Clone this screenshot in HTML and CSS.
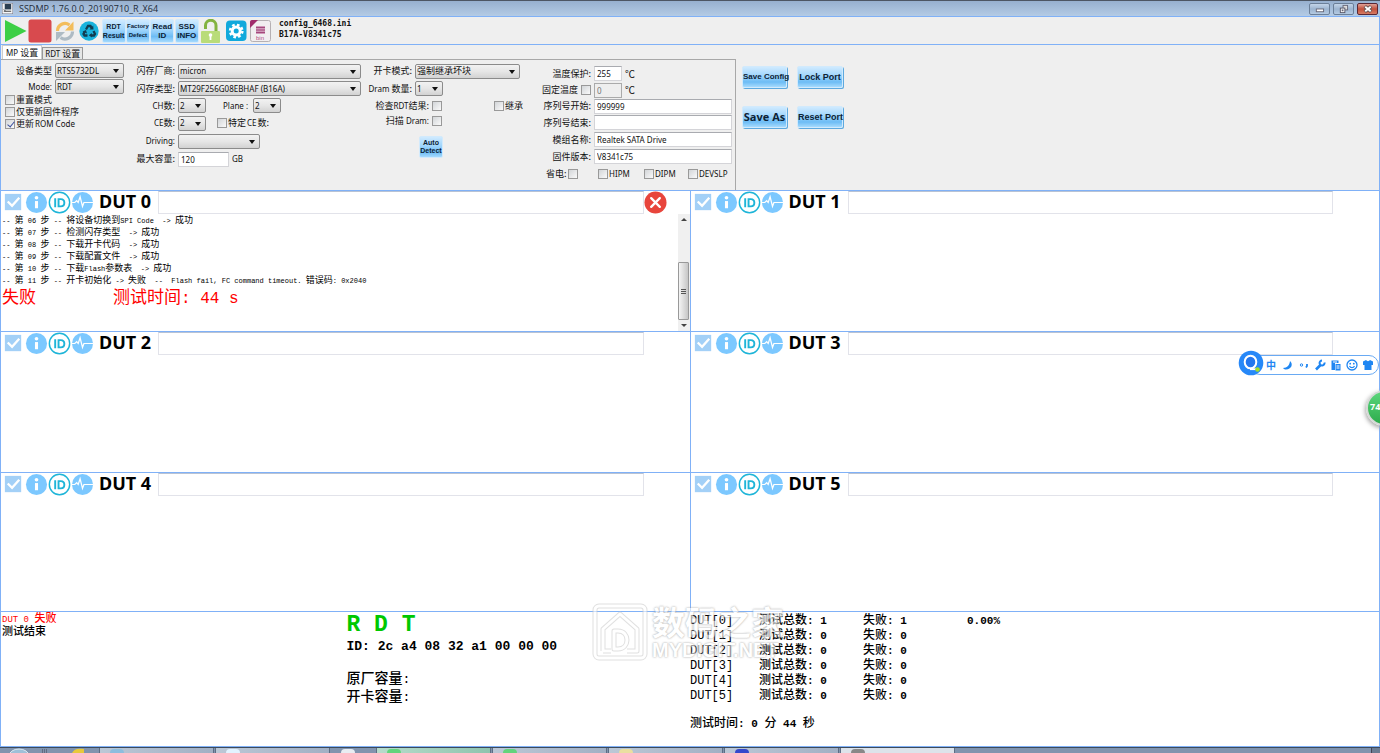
FILE: index.html
```html
<!DOCTYPE html>
<html lang="zh-CN">
<head>
<meta charset="utf-8">
<title>SSDMP 1.76.0.0_20190710_R_X64</title>
<link rel="stylesheet" href="styles.css">
</head>
<body>
<svg class="defs" aria-hidden="true">
  <symbol id="i-check" viewBox="0 0 24 24"><rect x="3" y="3" width="17" height="17" fill="#a3d0f7"/><path d="M6 11l4.500 4.500L18 7" fill="none" stroke="#fff" stroke-width="2.400"/></symbol>
  <symbol id="i-info" viewBox="0 0 24 24"><circle cx="12" cy="12" r="11" fill="#7cc8ff"/><circle cx="12" cy="7" r="1.900" fill="#fff"/><path d="M12 10.500v7.500" stroke="#fff" stroke-width="3.200"/></symbol>
  <symbol id="i-id" viewBox="0 0 24 24"><circle cx="12" cy="12" r="10.600" fill="#fff" stroke="#1fb5d8" stroke-width="1.500"/><path d="M7.500 7.500v9.500M11 8.500v7.500h2.300c5 0 5-7.500 0-7.500z" fill="none" stroke="#1fb5d8" stroke-width="2"/></symbol>
  <symbol id="i-pulse" viewBox="0 0 24 24"><circle cx="12" cy="12" r="11" fill="#7cc8ff"/><path d="M0 12h4l2-2 1.500 2 2-6 2.500 10 1.500-4H23" fill="none" stroke="#fff" stroke-width="1.300"/></symbol>
</svg>

<header class="titlebar">
  <svg class="app-icon" viewBox="0 0 12 12"><rect width="12" height="12" fill="#f4f6f8" stroke="#667"/><rect x="3" y="1" width="7" height="6" fill="#2b3f52"/><path d="M2 9h8M2 7l2 2" stroke="#333"/></svg>
  <h1>SSDMP 1.76.0.0_20190710_R_X64</h1>
  <div class="window-buttons">
    <button type="button" aria-label="最小化"><svg viewBox="0 0 20 11"><rect x="6.500" y="5.500" width="8" height="3" fill="#fff" stroke="#667"/></svg></button>
    <button type="button" aria-label="还原"><svg viewBox="0 0 20 11"><rect x="9.500" y="1.500" width="5" height="5" fill="#ddd" stroke="#667"/><rect x="6.500" y="4.500" width="5" height="5" fill="#fff" stroke="#556"/><rect x="8" y="6" width="2" height="2" fill="#667"/></svg></button>
    <button type="button" class="close" aria-label="关闭"><svg viewBox="0 0 20 11"><path d="M7 2.500l7 6M14 2.500l-7 6" stroke="#655" stroke-width="4"/><path d="M7.500 3l6 5M13.500 3l-6 5" stroke="#fff" stroke-width="2"/></svg></button>
  </div>
</header>

<nav class="toolbar">
  <div class="tools">
    <button type="button" class="tool" aria-label="开始"><svg viewBox="0 0 24 24"><path d="M1 1L22.500 12 1 23z" fill="#3ccf45"/></svg></button>
    <button type="button" class="tool" aria-label="停止"><svg viewBox="0 0 24 24"><rect x="0.500" y="0.500" width="23" height="23" rx="2.500" fill="#d84a4e"/></svg></button>
    <button type="button" class="tool" aria-label="刷新"><svg viewBox="0 0 24 24"><path d="M4.500 12a7.500 7.500 0 0 1 12-6" fill="none" stroke="#f3bd5b" stroke-width="3.200"/><path d="M20.500 2.500v9h-8.500z" fill="#f3bd5b"/><path d="M19.500 12.500a7.500 7.500 0 0 1-12 6" fill="none" stroke="#aebbc4" stroke-width="3.200"/><path d="M3 22v-9h9z" fill="#aebbc4"/></svg></button>
    <button type="button" class="tool" aria-label="循环"><svg viewBox="0 0 24 24"><circle cx="12" cy="12" r="9.700" fill="#19b3dd"/><g fill="none" stroke="#113c50" stroke-width="2.300"><path d="M9 10.500l2-3.500h2.500l1 2"/><path d="M16.500 12l1.500 3-1 1.500h-3"/><path d="M10.500 16.500H7.500L6.500 15l1-2"/></g><path d="M12.500 10.500h4l-.3-4zM14.800 14v4.600l-3-2.300zM5.500 12.500l3.500-1.500 1 3.500z" fill="#113c50"/></svg></button>
    <button type="button" class="tool glossy">RDT<br>Result</button>
    <button type="button" class="tool glossy tiny">Factory<br>Defect</button>
    <button type="button" class="tool glossy medium">Read<br>ID</button>
    <button type="button" class="tool glossy medium">SSD<br>INFO</button>
    <button type="button" class="tool" aria-label="解锁"><svg viewBox="0 0 24 24"><path d="M6.500 10V6.500a5 5 0 0 1 10.500 0V12" fill="none" stroke="#83b340" stroke-width="3"/><rect x="2" y="12" width="19" height="12" rx="1" fill="#b9dc79"/><circle cx="11.500" cy="16" r="1.800" fill="#fff"/><path d="M11.500 16v5" stroke="#fff" stroke-width="1.800"/></svg></button>
    <button type="button" class="tool" aria-label="设置"><svg viewBox="0 0 24 24"><rect x="2" y="1.500" width="20.500" height="20.500" rx="4" fill="#10a9dc"/><circle cx="12.200" cy="12" r="6.200" fill="none" stroke="#fff" stroke-width="2.400" stroke-dasharray="2.600 2.270"/><circle cx="12.200" cy="12" r="4" fill="none" stroke="#fff" stroke-width="3"/></svg></button>
    <button type="button" class="tool" aria-label="bin 文件"><svg viewBox="0 0 24 24"><rect x="2.500" y="1.500" width="20" height="21" rx="2" fill="#f1eef0" stroke="#b5b0b3"/><path d="M2 9V3a2 2 0 0 1 2-2h6z" fill="#a02c6c"/><path d="M8 7h9v8H8z" fill="#cf9ab9"/><path d="M8 8.500h9M8 11h9M8 13.500h9" stroke="#a4487c" stroke-width="1"/><text x="8" y="21" class="bin-label">bin</text></svg></button>
  </div>
  <p class="config-name">config_6468.ini<br>B17A-V8341c75</p>
</nav>

<section class="config">
  <div class="tabs" role="tablist">
    <button type="button" class="tab active" role="tab" aria-selected="true">MP <span>设置</span></button>
    <button type="button" class="tab" role="tab" aria-selected="false">RDT <span>设置</span></button>
  </div>
  <div class="config-body">
    <form class="settings">
      <div class="col device">
        <div class="row"><label for="dev"><span>设备类型</span></label><span class="combo w-device"><select id="dev"><option>RTS5732DL</option></select></span></div>
        <div class="row"><label for="mode">Mode:</label><span class="combo w-device"><select id="mode"><option>RDT</option></select></span></div>
        <label class="tick"><input type="checkbox"><span>重置模式</span></label>
        <label class="tick"><input type="checkbox"><span>仅更新固件程序</span></label>
        <label class="tick"><input type="checkbox" checked><span>更新</span>ROM Code</label>
      </div>
      <div class="col flash">
        <div class="row"><label for="vendor"><span>闪存厂商:</span></label><span class="combo w-full"><select id="vendor"><option>micron</option></select></span></div>
        <div class="row"><label for="ftype"><span>闪存类型:</span></label><span class="combo w-full"><select id="ftype"><option>MT29F256G08EBHAF (B16A)</option></select></span></div>
        <div class="row"><label for="ch">CH<span>数:</span></label><span class="combo w-small"><select id="ch"><option>2</option></select></span><label class="plane" for="plane">Plane :</label><span class="combo w-small"><select id="plane"><option>2</option></select></span></div>
        <div class="row"><label for="ce">CE<span>数:</span></label><span class="combo w-small"><select id="ce"><option>2</option></select></span><label class="tick special"><input type="checkbox"><span>特定</span>CE<span>数:</span></label></div>
        <div class="row"><label for="driving">Driving:</label><span class="combo w-driving"><select id="driving"><option></option></select></span></div>
        <div class="row"><label for="cap"><span>最大容量:</span></label><input class="field w-cap" id="cap" value="120"><span class="unit-gb">GB</span></div>
      </div>
      <div class="col card">
        <div class="row"><label for="open"><span>开卡模式:</span></label><span class="combo w-open cjk"><select id="open"><option>强制继承坏块</option></select></span></div>
        <div class="row"><label for="dram">Dram <span>数量:</span></label><span class="combo w-small"><select id="dram"><option>1</option></select></span></div>
        <div class="row wide"><label for="chk"><span>检查</span>RDT<span>结果:</span></label><input type="checkbox" id="chk"><label class="tick inherit"><input type="checkbox"><span>继承</span></label></div>
        <div class="row wide"><label for="scan"><span>扫描</span> Dram:</label><input type="checkbox" id="scan"></div>
        <button type="button" class="glossy auto">Auto<br>Detect</button>
      </div>
      <div class="col drive">
        <div class="row"><label for="temp"><span>温度保护:</span></label><input class="field w-temp" id="temp" value="255"><span class="unit">℃</span></div>
        <div class="row"><label for="fixed"><span>固定温度</span></label><input type="checkbox" aria-label="固定温度"><input class="field w-temp" id="fixed" value="0" disabled><span class="unit">℃</span></div>
        <div class="row"><label for="sn1"><span>序列号开始:</span></label><input class="field" id="sn1" value="999999"></div>
        <div class="row"><label for="sn2"><span>序列号结束:</span></label><input class="field" id="sn2"></div>
        <div class="row"><label for="model"><span>模组名称:</span></label><input class="field" id="model" value="Realtek SATA Drive"></div>
        <div class="row"><label for="fw"><span>固件版本:</span></label><input class="field" id="fw" value="V8341c75"></div>
        <div class="power">
          <label class="tick"><span>省电:</span><input type="checkbox"></label>
          <label class="tick"><input type="checkbox">HIPM</label>
          <label class="tick"><input type="checkbox">DIPM</label>
          <label class="tick"><input type="checkbox">DEVSLP</label>
        </div>
      </div>
    </form>
    <div class="actions">
      <button type="button" class="glossy act tight">Save Config</button>
      <button type="button" class="glossy act">Lock Port</button>
      <button type="button" class="glossy act broad">Save As</button>
      <button type="button" class="glossy act">Reset Port</button>
    </div>
  </div>
</section>

<main class="duts">
  <section class="dut">
    <div class="dut-head">
      <svg><use href="#i-check"/></svg><svg><use href="#i-info"/></svg><svg><use href="#i-id"/></svg><svg><use href="#i-pulse"/></svg>
      <h2>DUT 0</h2><input aria-label="DUT 0" readonly>
      <div class="state"><svg viewBox="0 0 24 24"><circle cx="12" cy="12" r="11.500" fill="#e8453c"/><path d="M7.500 7.500l9 9M16.500 7.500l-9 9" stroke="#fff" stroke-width="2.400" stroke-linecap="round"/></svg></div>
    </div>
    <div class="log-wrap">
      <div class="log">
        <p>-- <span>第</span> 05 <span>步</span> -- <span>设置主控</span>&nbsp; -&gt; <span>成功</span></p>
        <p>-- <span>第</span> 06 <span>步</span> -- <span>将设备切换到</span>SPI Code&nbsp; -&gt; <span>成功</span></p>
        <p>-- <span>第</span> 07 <span>步</span> -- <span>检测闪存类型</span>&nbsp; -&gt; <span>成功</span></p>
        <p>-- <span>第</span> 08 <span>步</span> -- <span>下载开卡代码</span>&nbsp; -&gt; <span>成功</span></p>
        <p>-- <span>第</span> 09 <span>步</span> -- <span>下载配置文件</span>&nbsp; -&gt; <span>成功</span></p>
        <p>-- <span>第</span> 10 <span>步</span> -- <span>下载</span>Flash<span>参数表</span>&nbsp; -&gt; <span>成功</span></p>
        <p>-- <span>第</span> 11 <span>步</span> -- <span>开卡初始化</span> -&gt; <span>失败</span>&nbsp; --&nbsp; Flash fail, FC command timeout. <span>错误码</span>: 0x2040</p>
        <p class="result"><span class="verdict">失败</span><span>测试时间</span>: 44 s</p>
      </div>
      <div class="scrollbar"><i class="up"></i><div class="thumb"><b></b><b></b><b></b></div><i class="down"></i></div>
    </div>
  </section>
  <section class="dut"><div class="dut-head"><svg><use href="#i-check"/></svg><svg><use href="#i-info"/></svg><svg><use href="#i-id"/></svg><svg><use href="#i-pulse"/></svg><h2>DUT 1</h2><input aria-label="DUT 1" readonly><div class="state"></div></div></section>
  <section class="dut"><div class="dut-head"><svg><use href="#i-check"/></svg><svg><use href="#i-info"/></svg><svg><use href="#i-id"/></svg><svg><use href="#i-pulse"/></svg><h2>DUT 2</h2><input aria-label="DUT 2" readonly><div class="state"></div></div></section>
  <section class="dut"><div class="dut-head"><svg><use href="#i-check"/></svg><svg><use href="#i-info"/></svg><svg><use href="#i-id"/></svg><svg><use href="#i-pulse"/></svg><h2>DUT 3</h2><input aria-label="DUT 3" readonly><div class="state"></div></div></section>
  <section class="dut"><div class="dut-head"><svg><use href="#i-check"/></svg><svg><use href="#i-info"/></svg><svg><use href="#i-id"/></svg><svg><use href="#i-pulse"/></svg><h2>DUT 4</h2><input aria-label="DUT 4" readonly><div class="state"></div></div></section>
  <section class="dut"><div class="dut-head"><svg><use href="#i-check"/></svg><svg><use href="#i-info"/></svg><svg><use href="#i-id"/></svg><svg><use href="#i-pulse"/></svg><h2>DUT 5</h2><input aria-label="DUT 5" readonly><div class="state"></div></div></section>
</main>

<section class="summary">
  <div class="messages">
    <p class="fail">DUT 0 <span>失败</span></p>
    <p><span>测试结束</span></p>
  </div>
  <div class="identity">
    <p class="rdt">R D T</p>
    <p class="flash-id">ID: 2c a4 08 32 a1 00 00 00</p>
    <p class="capacity"><span>原厂容量</span>:<br><span>开卡容量</span>:</p>
  </div>
  <div class="stats">
    <table>
      <tr><th>DUT[0]</th><td><span>测试总数</span>: 1</td><td><span>失败</span>: 1</td><td>0.00%</td></tr>
      <tr><th>DUT[1]</th><td><span>测试总数</span>: 0</td><td><span>失败</span>: 0</td><td></td></tr>
      <tr><th>DUT[2]</th><td><span>测试总数</span>: 0</td><td><span>失败</span>: 0</td><td></td></tr>
      <tr><th>DUT[3]</th><td><span>测试总数</span>: 0</td><td><span>失败</span>: 0</td><td></td></tr>
      <tr><th>DUT[4]</th><td><span>测试总数</span>: 0</td><td><span>失败</span>: 0</td><td></td></tr>
      <tr><th>DUT[5]</th><td><span>测试总数</span>: 0</td><td><span>失败</span>: 0</td><td></td></tr>
    </table>
    <p class="elapsed"><span>测试时间</span>: 0 <span>分</span> 44 <span>秒</span></p>
  </div>
  <div class="watermark">
    <svg viewBox="0 0 56 58"><g fill="none" stroke-linejoin="round"><g stroke="#ccc" stroke-width="5"><rect x="3" y="3" width="50" height="52" rx="4"/><path d="M11 48V26L28 11l17 15v22H35M11 48h8M22 28v18h4c12 0 12-18 0-18z"/></g><g stroke="#fff" stroke-width="3"><rect x="3" y="3" width="50" height="52" rx="4"/><path d="M11 48V26L28 11l17 15v22H35M11 48h8M22 28v18h4c12 0 12-18 0-18z"/></g></g></svg>
    <div class="mark-text"><strong>数码之家</strong><em>MYDIGIT.NET</em></div>
  </div>
</section>

<footer class="taskbar">
  <div class="start"><svg viewBox="0 0 97 5"><ellipse cx="19" cy="8" rx="10" ry="7" fill="#9fc0d8" stroke="#dce8f0"/><path d="M42 2h6M42 4h6" stroke="#445" stroke-dasharray="1 1"/><path d="M72 5c2-4 5-5 12-4v4z" fill="#e8c93a"/></svg></div>
  <div class="task"><i class="dot blue"></i></div>
  <div class="task"><i class="dot sky"></i></div>
  <div class="pinned"><i class="dot white"></i></div>
  <div class="task green"><i class="dot lime"></i></div>
  <div class="task"><i class="dot lime"></i></div>
  <div class="task"><i class="dot yellow"></i></div>
  <div class="task"><i class="dot navy"></i></div>
  <div class="task current"><i class="dot gray"></i></div>
  <div class="tray"></div>
  <div class="desktop"></div>
</footer>

<aside class="ime">
  <div class="ime-bar">
    <b>中</b>
    <svg viewBox="0 0 12 12"><path d="M8 2c3.500 3 1.500 8.500-4 8.500-1.500 0-2.500-.6-3-1.500C5.500 9 7.500 6 8 2z" fill="#1f86f2"/></svg>
    <svg viewBox="0 0 12 12"><circle cx="3.500" cy="6" r="1.200" fill="none" stroke="#1f86f2"/><path d="M9 5v2l-1 1.500" stroke="#1f86f2" stroke-width="1.800" fill="none"/></svg>
    <svg viewBox="0 0 12 12"><path d="M2 10.500L7 5.500" stroke="#1f86f2" stroke-width="2.600"/><path d="M10.500 3.500A2.500 2.500 0 1 1 8 1.500" fill="none" stroke="#1f86f2" stroke-width="2"/></svg>
    <svg viewBox="0 0 12 12"><path d="M1.500 1.500h7V4H5v7H1.500z" fill="#1f86f2"/><rect x="5.500" y="5" width="5" height="6.500" fill="#1f86f2"/><path d="M3 3h4" stroke="#fff"/><path d="M6.500 7h3M6.500 9h3" stroke="#fff"/></svg>
    <svg viewBox="0 0 12 12"><circle cx="6" cy="6" r="5" fill="none" stroke="#1f86f2" stroke-width="1.300"/><circle cx="4.200" cy="4.700" r=".9" fill="#1f86f2"/><circle cx="7.800" cy="4.700" r=".9" fill="#1f86f2"/><path d="M3.500 7c1 2.200 4 2.200 5 0" fill="none" stroke="#1f86f2" stroke-width="1.200"/></svg>
    <svg viewBox="0 0 12 12"><path d="M1 2.500L4 1c1 1.500 3 1.500 4 0l3 1.500V6H9.500v5h-7V6H1z" fill="#1f86f2"/></svg>
  </div>
  <svg class="ime-logo" viewBox="0 0 26 26"><circle cx="13" cy="13" r="12.300" fill="#2788f8"/><ellipse cx="12.500" cy="12" rx="5.800" ry="6.300" fill="#2477ee" stroke="#fff" stroke-width="2"/><path d="M12 19.200h6" stroke="#fff" stroke-width="1.800"/><circle cx="19.500" cy="19.500" r="2.300" fill="#a4dd25"/></svg>
</aside>
<div class="meter"><span>74</span></div>
</body>
</html>
```

FILE: styles.css
```css
* { box-sizing: border-box; }
html, body { margin: 0; }
body {
  --line: #80b1f7;
  --cjk: "Noto Sans CJK SC", sans-serif;
  --mono: "Liberation Mono", "Noto Sans CJK SC", monospace;
  position: relative;
  display: flex;
  flex-direction: column;
  height: 100vh;
  overflow: hidden;
  background: #fff;
  color: #111;
  font-family: "Noto Sans", "Noto Sans CJK SC", sans-serif;
  font-size: 8px;
  line-height: 12px;
}
h1, h2, p { margin: 0; }
button, input, select { margin: 0; padding: 0; font: inherit; color: inherit; }
button { border: 0; background: none; }
.defs { position: absolute; width: 0; height: 0; }

/* title bar */
.titlebar {
  display: flex;
  flex: none;
  align-items: center;
  gap: 6px;
  height: 16px;
  padding-left: 2px;
  border-top: 1px solid #4d5664;
  background: linear-gradient(#97b0cf, #b4cbe5);
}
.app-icon { width: 11px; height: 11px; }
.titlebar h1 { flex: 1; font: 9px/14px "Open Sans", sans-serif; color: #222b38; }
.window-buttons { display: flex; gap: 3px; padding-right: 2px; }
.window-buttons button {
  width: 21px;
  height: 12px;
  border: 1px solid #6b7f98;
  border-radius: 2px;
  background: linear-gradient(#c3d4e8, #9cb4d0 50%, #b4cae2);
}
.window-buttons .close { border-color: #5b2733; background: linear-gradient(#e0a297, #c2503b 50%, #d67b62); }
.window-buttons svg { display: block; width: 100%; height: 100%; }

/* toolbar */
.toolbar {
  display: flex;
  flex: none;
  align-items: center;
  gap: 7px;
  height: 29px;
  padding-left: 3px;
  border: 1px solid var(--line);
  background: #efefef;
}
.tools { display: flex; justify-content: space-between; width: 268px; }
.tool { flex: none; width: 24px; height: 24px; }
.tool svg { display: block; width: 24px; height: 24px; }
.glossy {
  border: 1px solid #d2eafc;
  border-radius: 2px;
  background: linear-gradient(#cfeaff, #9fd5fc 45%, #6dbcf5 75%, #a5dafd);
  font: bold 7px/9px "Liberation Sans", sans-serif;
  color: #0d2235;
  white-space: nowrap;
}
.toolbar .glossy { display: flex; align-items: center; justify-content: center; }
.toolbar .tiny { font-size: 6px; }
.toolbar .medium { font-size: 8px; }
.bin-label { font: 6px "Liberation Sans", sans-serif; fill: #b14a82; }
.config-name { padding-bottom: 3px; font: bold 8px/11px "DejaVu Sans Mono", monospace; }

/* settings */
.config {
  display: flex;
  flex: none;
  flex-direction: column;
  height: 145px;
  border: solid var(--line);
  border-width: 0 1px;
  background: #efefef;
}
.tabs { display: flex; align-items: flex-end; height: 14px; padding-left: 1px; }
.tab { height: 12px; padding: 0 2px; border: 1px solid #999; border-bottom: 0; background: #e6e6e6; font-size: 8px; line-height: 11px; }
.tab.active { height: 14px; padding: 0 3px; border-color: #ccc; background: #fff; line-height: 12px; }
.tab span, .row label span, .tick span { font: 9px/12px var(--cjk); }
.config-body { display: flex; flex: 1; }
.settings { display: flex; width: 735px; border: solid #a8a8a8; border-width: 1px 1px 0 0; }
.col { display: grid; align-content: start; padding-top: 2px; }
.row { display: flex; align-items: center; gap: 3px; }
.row > label:first-child { flex: none; text-align: right; white-space: nowrap; }
.device { width: 124px; grid-template-rows: 17px 15px 12px 12px 12px; }
.device .row > label:first-child { width: 51px; }
.flash { width: 238px; grid-template-rows: 18px 17px 17px 18px 18px 18px; }
.flash .row > label:first-child { width: 50px; }
.card { width: 170px; grid-template-rows: 18px 17px 17px 14px 30px; }
.card .row > label:first-child { width: 49px; }
.card .row.wide > label:first-child { width: 66px; }
.drive { flex: 1; padding: 5px 3px 0 0; grid-template-rows: 17px 16px 16px 17px 17px 17px 17px; }
.drive .row > label:first-child { width: 58px; }
.device .tick { padding-left: 4px; }
.tick { display: flex; align-items: center; gap: 1px; white-space: nowrap; }
.tick.special { margin-left: 8px; }
.tick.inherit { margin-left: 49px; }

.combo {
  position: relative;
  display: block;
  height: 15px;
  border: 1px solid #8b8b8b;
  border-radius: 2px;
  background: linear-gradient(#f2f2f2, #e6e6e6 50%, #d2d2d2);
}
.combo::after {
  content: "";
  position: absolute;
  top: 5px;
  right: 4px;
  border: solid transparent;
  border-width: 4px 3px 0;
  border-top-color: #111;
}
.combo select {
  display: block;
  width: 100%;
  height: 13px;
  padding: 0 0 0 1px;
  border: 0;
  appearance: none;
  background: none;
  font-size: 8px;
}
.combo.cjk select { font-size: 9px; }
.w-device { width: 69px; }
.w-full { width: 183px; }
.w-small { width: 28px; }
.w-driving { width: 82px; }
.w-open { width: 105px; }
.plane { margin-left: 14px; margin-right: 2px; }

.field { flex: 1; min-width: 0; height: 15px; padding: 0 2px; border: 1px solid #d4d4d8; border-top-color: #a9abb0; background: #fff; font-size: 8px; }
.field:disabled { border-color: #aaa; background: #eee; color: #777; }
.w-cap { flex: none; width: 51px; }
.w-temp { flex: none; width: 28px; }
.unit { font: 10px/12px var(--cjk); }
.drive .row:nth-child(2) > label:first-child { width: 45px; }
.power { display: flex; align-items: center; padding-left: 13px; }
.power .tick:nth-child(1) { width: 52px; }
.power .tick:nth-child(2) { width: 46px; }
.power .tick:nth-child(3) { width: 44px; }

input[type="checkbox"] {
  position: relative;
  flex: none;
  width: 10px;
  height: 10px;
  appearance: none;
  border: 1px solid #999;
  background: linear-gradient(135deg, #d2d5d8, #fafafa);
}
input[type="checkbox"]:checked::after {
  content: "";
  position: absolute;
  top: 0;
  left: 3px;
  width: 3px;
  height: 6px;
  border: solid #3a4f9c;
  border-width: 0 1px 1px 0;
  transform: rotate(40deg);
}
.auto { align-self: end; width: 24px; height: 22px; margin-left: 56px; line-height: 8px; }

.actions { display: grid; grid-template-columns: 45px 46px; grid-template-rows: 22px 22px; gap: 18px 10px; padding: 7px 0 0 6px; }
.act { font: bold 9px/20px "Liberation Sans", sans-serif; box-shadow: 1px 1px 0 #5da9df; }
.act.tight { font-size: 8px; }
.act.broad { font: bold 11px/20px "Open Sans", sans-serif; }

/* test slots */
.duts {
  flex: 1;
  min-height: 0;
  display: grid;
  grid-template-columns: 1fr 1fr;
  grid-template-rows: minmax(0, 141fr) minmax(0, 141fr) minmax(0, 139fr);
  border: solid var(--line);
  border-width: 0 1px 0 0;
}
.dut { display: flex; flex-direction: column; min-height: 0; border: solid var(--line); border-width: 1px 0 0 1px; }
.dut-head { display: flex; flex: none; align-items: center; height: 23px; padding-left: 1px; }
.dut-head > svg { flex: none; width: 23px; height: 23px; }
.dut-head h2 { width: 64px; height: 23px; padding-left: 5px; font: bold 18px/20px "Noto Sans", sans-serif; color: #000; white-space: nowrap; }
.dut-head input { flex: 1; min-width: 0; height: 23px; border: 1px solid #e2e3ea; border-top-color: #b9c3d4; background: #fff; }
.state { width: 46px; height: 23px; }
.state svg { display: block; width: 23px; height: 23px; }
.log-wrap { display: flex; flex: 1; min-height: 0; }
.log { display: flex; flex: 1; flex-direction: column; justify-content: flex-end; padding: 0 0 20px 1px; overflow: hidden; }
.log p { flex: none; height: 12px; font: 7px/12px var(--mono); white-space: nowrap; color: #000; }
.log p span { font: 9px/1px var(--cjk); }
.log p.result { height: 24px; font: 16px/24px var(--mono); color: #f00; }
.log p.result span { font: 17px/1px var(--cjk); }
.log p.result .verdict { display: inline-block; width: 111px; }
.scrollbar { display: flex; flex-direction: column; align-items: center; justify-content: flex-end; width: 12px; padding: 4px 0; background: #f0f0f0; }
.scrollbar i { border: solid transparent; }
.scrollbar .up { margin-bottom: auto; border-width: 0 3px 3px; border-bottom-color: #444; }
.scrollbar .down { margin-top: 4px; border-width: 3px 3px 0; border-top-color: #444; }
.thumb { display: flex; flex-direction: column; align-items: center; justify-content: center; gap: 1px; width: 11px; height: 58px; border: 1px solid #999; border-radius: 1px; background: linear-gradient(90deg, #f4f4f4, #c6c6c6); }
.thumb b { width: 5px; height: 1px; background: #555; }

/* summary */
.summary {
  position: relative;
  display: grid;
  flex: none;
  grid-template-columns: 1fr 1fr 2fr;
  height: 136px;
  border: 1px solid var(--line);
  font-family: var(--mono);
  color: #000;
}
.messages { padding: 2px 1px; font-size: 9px; line-height: 13px; }
.messages span { font: 500 11px/1px var(--cjk); }
.messages .fail { color: #f00; }
.identity { padding: 2px 0 0 1px; }
.rdt { font: bold 23px/23px var(--mono); color: #00c800; }
.flash-id { font: bold 13px/20px var(--mono); }
.capacity { padding-top: 14px; font: 13px/18px var(--mono); }
.capacity span { font: 500 14px/1px var(--cjk); }
.stats { padding: 2px 0 0 0; }
.stats table { border-collapse: collapse; }
.stats th, .stats td { height: 15px; padding: 0; font: bold 11px/15px var(--mono); text-align: left; white-space: nowrap; }
.stats th { min-width: 69px; font: 12px/15px var(--mono); }
.stats td:nth-child(2), .stats td:nth-child(3) { min-width: 104px; }
.stats td span, .elapsed span { font: 500 12px/1px var(--cjk); }
.elapsed { padding-top: 13px; font: bold 11px/15px var(--mono); }
.watermark { position: absolute; top: -9px; left: 591px; display: flex; gap: 4px; opacity: .6; }
.watermark svg { width: 56px; height: 58px; }
.mark-text { display: flex; flex-direction: column; color: #fff; text-shadow: 0 0 2px #999, 0 0 2px #999; }
.mark-text strong { font: bold 33px/36px var(--cjk); }
.mark-text em { font: bold 20px/22px "Liberation Sans", sans-serif; }

/* task bar */
.taskbar { display: flex; flex: none; gap: 1px; height: 6px; border-top: 1px solid #3c4a5c; background: #8194ae; overflow: hidden; }
.start { width: 98px; }
.start svg { display: block; width: 97px; height: 5px; }
.task { width: 115px; border: solid #5d6d84; border-width: 0 1px; background: linear-gradient(90deg, #bcc8d6, #a2b0c4); }
.task.green { background: linear-gradient(90deg, #b7dccb, #8fc4ae); }
.task.current { background: #dde3ea; }
.pinned { width: 44px; }
.tray { flex: 1; }
.desktop { width: 9px; border-left: 1px solid #445; background: #6c7c92; }
.dot { display: block; width: 14px; height: 4px; margin: 1px 0 0 10px; border-radius: 4px 4px 0 0; }
.blue { background: #8dbdde; }
.sky { background: #e2f3ff; }
.white { background: #e8edf2; }
.lime { background: #62d47c; }
.yellow { background: #eadfa0; }
.navy { background: #3548cc; }
.gray { background: #888; }

/* floating widgets */
.ime { position: absolute; top: 351px; right: 1px; width: 141px; height: 26px; }
.ime-bar { display: flex; align-items: center; gap: 4px; height: 20px; margin: 4px 0 0 12px; padding-left: 15px; border: 1px solid #69aaf3; border-radius: 10px; background: #fff; }
.ime-bar svg { width: 12px; height: 12px; }
.ime-bar b { width: 12px; font: bold 10px/12px var(--cjk); color: #1f86f2; }
.ime-logo { position: absolute; top: -1px; left: 0; width: 26px; height: 26px; }
.meter { position: absolute; top: 390px; right: -22px; width: 36px; height: 36px; border: 2px solid #d5d9d6; border-radius: 50%; background: linear-gradient(#5cd67c, #2cab4b); box-shadow: -1px 2px 4px #aaa; }
.meter span { display: block; margin: 9px 0 0 2px; font: bold 9px/12px "Noto Sans", sans-serif; color: #fff; }
```
